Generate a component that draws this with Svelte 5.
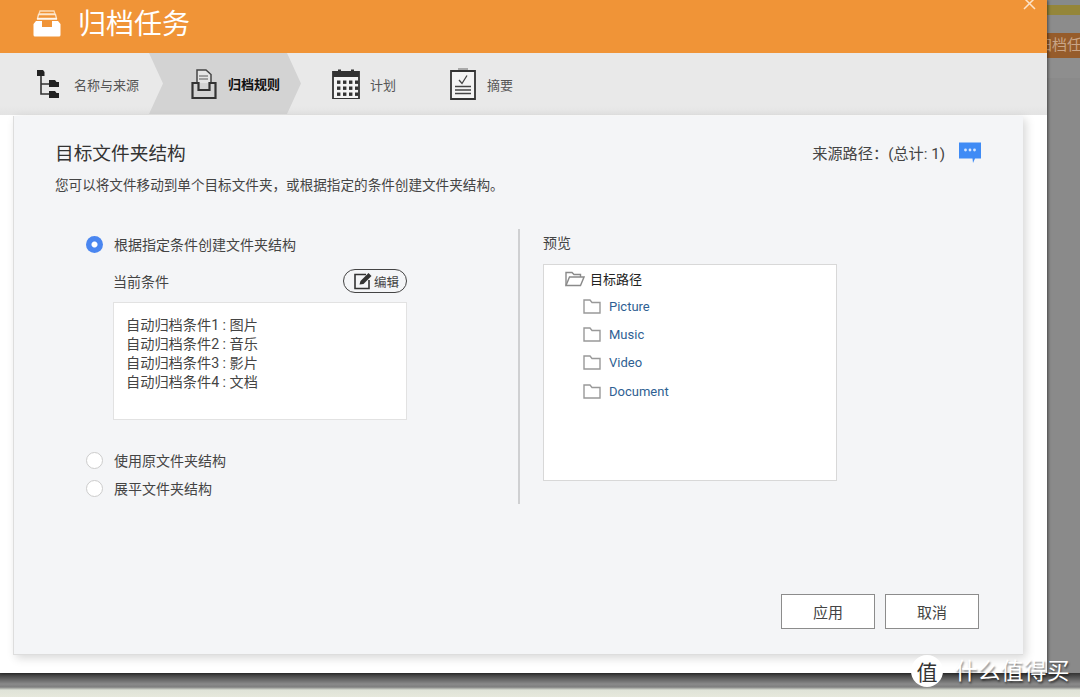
<script>
	const conditions = [
		'自动归档条件1 : 图片',
		'自动归档条件2 : 音乐',
		'自动归档条件3 : 影片',
		'自动归档条件4 : 文档'
	];
	const folders = ['Picture', 'Music', 'Video', 'Document'];
</script>

<div class="page">
	<div class="main">
		<div class="dialog">
			<header class="title-bar">
				<svg class="archive-icon" width="28" height="27" viewBox="0 0 28 27">
					<path d="M7 1 H21 L22 4 H6 Z" fill="none" stroke="#fbdcb8" stroke-width="1.3" />
					<path d="M5.5 4.5 H22.5 L23.5 8.5 H4.5 Z" fill="none" stroke="#fde6cc" stroke-width="1.3" />
					<path d="M4 9 H24" stroke="#fff" stroke-width="1.3" />
					<path d="M0.5 14 L3 11 H9 V17 H19 V11 H25 L27.5 14 V25 Q27.5 26.5 26 26.5 H2 Q0.5 26.5 0.5 25 Z" fill="#fff" />
				</svg>
				<h1>归档任务</h1>
				<svg class="close" width="13" height="13" viewBox="0 0 13 13">
					<path d="M1 1 L12 12 M12 1 L1 12" stroke="#fde3c8" stroke-width="1.5" />
				</svg>
			</header>

			<nav class="steps">
				<div class="step first">
					<svg width="26" height="30" viewBox="0 0 26 30">
						<g fill="#222">
							<path d="M1 1 H7 L8.5 3 V7 H1 Z" />
							<path d="M13 11 H19 L20.5 13 H23 V18 H13 Z" />
							<path d="M13 22 H19 L20.5 24 H23 V29 H13 Z" />
						</g>
						<path d="M5 7 V25 H13 M5 15 H13" fill="none" stroke="#333" stroke-width="1.6" />
					</svg>
					<span>名称与来源</span>
				</div>
				<div class="step active">
					<svg width="26" height="30" viewBox="0 0 26 30">
						<path d="M6 14 V1 H15 L20 5.5 V14" fill="#e4e4e4" stroke="#444" stroke-width="1.5" />
						<path d="M8 7 H17 M8 10 H17" stroke="#888" stroke-width="1.4" />
						<path d="M1.5 14 H7.5 V21 H18.5 V14 H24.5 V29 H1.5 Z" fill="none" stroke="#333" stroke-width="2.2" />
					</svg>
					<span>归档规则</span>
				</div>
				<div class="step third">
					<svg width="28" height="30" viewBox="0 0 28 30">
						<path d="M1 3 H27 V30 H1 Z" fill="#f4f4f4" stroke="#333" stroke-width="1.8" />
						<path d="M1 2.5 H6 V0.5 H9 V2.5 H19 V0.5 H22 V2.5 H27 V8 H1 Z" fill="#333" />
						<g fill="#333">
							{#each [11.5, 17.5, 23.5] as y}
								{#each [5, 11, 17, 23] as x}
									<rect {x} {y} width="3.4" height="3.4" />
								{/each}
							{/each}
						</g>
					</svg>
					<span>计划</span>
				</div>
				<div class="step fourth">
					<svg width="26" height="32" viewBox="0 0 26 32">
						<path d="M8 1 H18" stroke="#999" stroke-width="1.6" />
						<path d="M1 3 H25 V31 H1 Z" fill="#f4f4f4" stroke="#333" stroke-width="1.8" />
						<path d="M9 12 L12 15.5 L17 7.5" fill="none" stroke="#444" stroke-width="1.3" />
						<path d="M5 18.5 H21 M5 22 H21 M5 25.5 H21" stroke="#444" stroke-width="1.5" />
					</svg>
					<span>摘要</span>
				</div>
			</nav>

			<div class="body">
				<section class="panel">
					<div class="panel-head">
						<h2>目标文件夹结构</h2>
						<div class="source">
							<span class="source-label">来源路径：(总计: 1)</span>
							<svg width="24" height="22" viewBox="0 0 24 22">
								<path d="M1 0.5 H23 V16.5 H17 L15 21 L14.5 16.5 H1 Z" fill="#3f8bf5" />
								<circle cx="7.5" cy="8" r="1.4" fill="#d5e6ff" />
								<circle cx="12" cy="8" r="1.4" fill="#d5e6ff" />
								<circle cx="16.5" cy="8" r="1.4" fill="#d5e6ff" />
							</svg>
						</div>
					</div>
					<p class="desc">您可以将文件移动到单个目标文件夹，或根据指定的条件创建文件夹结构。</p>

					<div class="columns">
						<div class="left">
							<label class="radio-row">
								<span class="radio checked"></span>
								<span>根据指定条件创建文件夹结构</span>
							</label>
							<div class="cond-head">
								<span>当前条件</span>
								<button class="edit">
									<svg width="20" height="18" viewBox="0 0 20 18">
										<path d="M13 2.5 H2 V16.5 H16 V8" fill="none" stroke="#333" stroke-width="1.6" />
										<path d="M6.5 12.5 L7.5 9 L15.5 1 L18.5 4 L10.5 12 Z" fill="#333" />
									</svg>
									<span>编辑</span>
								</button>
							</div>
							<div class="cond-box">
								{#each conditions as line}
									<div>{line}</div>
								{/each}
							</div>
							<label class="radio-row second">
								<span class="radio"></span>
								<span>使用原文件夹结构</span>
							</label>
							<label class="radio-row last">
								<span class="radio"></span>
								<span>展平文件夹结构</span>
							</label>
						</div>

						<div class="right">
							<div class="preview-title">预览</div>
							<div class="tree">
								<div class="tree-root">
									<svg width="20" height="16" viewBox="0 0 20 16">
										<path d="M1 14.5 V1.5 H7 L9 3.5 H15.5 V6" fill="none" stroke="#8a8a8a" stroke-width="1.4" />
										<path d="M1 14.5 L4.5 6 H19 L15.5 14.5 Z" fill="#fff" stroke="#8a8a8a" stroke-width="1.4" />
									</svg>
									<span>目标路径</span>
								</div>
								{#each folders as name}
									<div class="tree-item">
										<svg width="18" height="15" viewBox="0 0 18 15">
											<path d="M1 14 V1 H7 L9 3.5 H17 V14 Z" fill="#fff" stroke="#999" stroke-width="1.4" />
										</svg>
										<span>{name}</span>
									</div>
								{/each}
							</div>
						</div>
					</div>

					<div class="actions">
						<button class="btn">应用</button>
						<button class="btn">取消</button>
					</div>
				</section>
			</div>
		</div>

		<aside class="behind">
			<div class="behind-top"></div>
			<div class="behind-band"><span>归档任务</span></div>
			<div class="behind-a"></div>
			<div class="behind-b"></div>
		</aside>
	</div>
	<div class="desktop"></div>

	<div class="watermark">
		<span class="mark">值</span>
		<span class="mark-text">什么值得买</span>
	</div>
</div>

<style>
	:global(body) {
		margin: 0;
		overflow: hidden;
	}

	.page {
		position: relative;
		display: flex;
		flex-direction: column;
		width: 1080px;
		height: 697px;
		overflow: hidden;
		font-family: Roboto, "Noto Sans CJK SC", sans-serif;
		color: #444;
	}

	.main {
		display: flex;
		height: 673px;
	}

	.dialog {
		display: flex;
		flex-direction: column;
		flex: none;
		width: 1047px;
		background: #fff;
		box-shadow: 1px 0 3px rgba(0, 0, 0, 0.5);
		z-index: 1;
	}

	.title-bar {
		display: flex;
		align-items: center;
		height: 53px;
		padding-left: 33px;
		box-sizing: border-box;
		background: #f09437;
		position: relative;
	}

	.archive-icon {
		margin-right: 17px;
		margin-top: -7px;
	}

	h1 {
		margin: -10px 0 0;
		font-size: 28px;
		font-weight: 400;
		color: #fff;
	}

	.close {
		position: absolute;
		right: 11px;
		top: -3px;
	}

	.steps {
		display: flex;
		height: 62px;
		background: linear-gradient(#e9e9e9, #e9e9e9 85%, #e3e3e3);
	}

	.step {
		display: flex;
		align-items: center;
		gap: 11px;
		font-size: 13px;
		color: #555;
		box-sizing: border-box;
	}

	.step svg {
		flex: none;
	}

	.first {
		width: 149px;
		padding-left: 36px;
		gap: 12px;
	}

	.active {
		width: 152px;
		padding-left: 42px;
		margin-bottom: 1px;
		color: #111;
		font-weight: 700;
		background: #d3d3d3;
		clip-path: polygon(0 0, 138px 0, 152px 50%, 138px 100%, 0 100%, 14px 50%);
	}

	.third {
		width: 149px;
		padding-left: 31px;
		gap: 10px;
	}

	.fourth {
		padding-left: 0;
	}

	.body {
		flex: 1;
		padding: 1px 24px 18px 13px;
		box-sizing: border-box;
	}

	.panel {
		position: relative;
		height: 539px;
		box-sizing: border-box;
		padding: 24px 41px 0 41px;
		background: #f4f5f7;
		border-left: 1px solid #ddd;
		border-bottom: 1px solid #ddd;
		box-shadow: 3px 3px 9px rgba(0, 0, 0, 0.16);
	}

	.panel-head {
		display: flex;
		justify-content: space-between;
		align-items: center;
		height: 26px;
	}

	h2 {
		margin: 1px 0 0;
		font-size: 18.7px;
		font-weight: 400;
		color: #333;
		line-height: 26px;
	}

	.source {
		display: flex;
		align-items: center;
		gap: 13px;
		font-size: 15.2px;
		color: #444;
	}

	.source-label {
		margin-bottom: 3px;
	}

	.desc {
		margin: 9px 0 0;
		font-size: 13.6px;
		line-height: 20px;
		color: #444;
	}

	.columns {
		display: flex;
		margin-top: 34px;
		margin-left: 31px;
	}

	.left {
		flex: none;
		width: 321px;
		height: 275px;
		margin-right: 136px;
		position: relative;
	}

	.left::after {
		content: "";
		position: absolute;
		top: 0;
		right: -113px;
		width: 2px;
		height: 275px;
		background: #cfd0d2;
	}

	.radio-row {
		display: flex;
		align-items: center;
		gap: 11px;
		font-size: 14px;
		color: #444;
		height: 28px;
		padding-top: 1px;
		box-sizing: content-box;
	}

	.radio {
		flex: none;
		width: 15px;
		height: 15px;
		border: 1px solid #ccc;
		border-radius: 50%;
		background: #fff;
	}

	.radio.checked {
		width: 17px;
		height: 17px;
		border: none;
		background: radial-gradient(circle, #fff 0 2.5px, #4a86f0 3.5px);
	}

	.cond-head {
		display: flex;
		justify-content: space-between;
		align-items: center;
		margin: 11px 0 0 27px;
		width: 294px;
		font-size: 14px;
		color: #444;
		height: 24px;
	}

	.edit {
		display: flex;
		align-items: center;
		gap: 1px;
		width: 64px;
		height: 24px;
		padding: 0 0 0 9px;
		box-sizing: border-box;
		border: 1px solid #444;
		border-radius: 12px;
		background: #f4f5f7;
		font: inherit;
		font-size: 12.5px;
		color: #444;
	}

	.cond-box {
		margin: 9px 0 0 27px;
		width: 294px;
		height: 118px;
		box-sizing: border-box;
		padding: 13px 12px;
		background: #fff;
		border: 1px solid #e2e2e2;
		font-size: 14.2px;
		line-height: 19px;
		color: #444;
	}

	.second {
		margin-top: 26px;
		padding-top: 0;
	}

	.last {
		padding-top: 0;
	}

	.preview-title {
		font-size: 14px;
		line-height: 28px;
		color: #444;
	}

	.tree {
		width: 294px;
		height: 217px;
		margin-top: 7px;
		box-sizing: border-box;
		padding: 0 0 0 21px;
		background: #fff;
		border: 1px solid #d8d8d8;
	}

	.tree-root {
		display: flex;
		align-items: center;
		gap: 5px;
		height: 27px;
		font-size: 13px;
		color: #222;
	}

	.tree-item {
		display: flex;
		align-items: center;
		gap: 8px;
		height: 28.3px;
		padding-left: 18px;
		font-size: 13px;
		color: #2f5f93;
	}

	.actions {
		position: absolute;
		right: 44px;
		bottom: 25px;
		display: flex;
		gap: 10px;
	}

	.btn {
		width: 94px;
		height: 35px;
		background: #fff;
		border: 1px solid #8c8c8c;
		border-radius: 0;
		font: inherit;
		font-size: 15px;
		color: #444;
	}

	.behind {
		flex: 1;
		display: flex;
		flex-direction: column;
		background: #8c8c8c;
		overflow: hidden;
	}

	.behind-top {
		flex: none;
		height: 15px;
		background: linear-gradient(#868a8c 0 5px, #94863a 5px);
	}

	.behind-band {
		flex: none;
		height: 25px;
		margin-top: 18px;
		background: #965c2b;
		font-size: 15px;
		line-height: 25px;
		color: #c9a587;
		white-space: nowrap;
	}

	.behind-band span {
		display: block;
		margin-left: -10px;
	}

	.behind-a {
		flex: none;
		height: 20px;
		background: #8e8e8e;
	}

	.behind-b {
		flex: 1;
		background: #8a8a8a;
	}

	.desktop {
		flex: 1;
		background: linear-gradient(#333 0, #5a5a5a 5px, #8a8a8a 11px, #7f7f7f 14px, #dfe3d8 17px, #e6e8dc);
	}

	.watermark {
		position: absolute;
		left: 911px;
		top: 655px;
		display: flex;
		align-items: center;
		gap: 12px;
		z-index: 2;
	}

	.mark {
		display: flex;
		align-items: center;
		justify-content: center;
		width: 32px;
		height: 32px;
		border-radius: 50%;
		background: #fff;
		color: #333;
		font-size: 21px;
	}

	.mark-text {
		font-size: 22.5px;
		line-height: 32px;
		color: #fff;
		text-shadow: 1px 2px 2px rgba(0, 0, 0, 0.5);
		letter-spacing: 0.5px;
	}
</style>
